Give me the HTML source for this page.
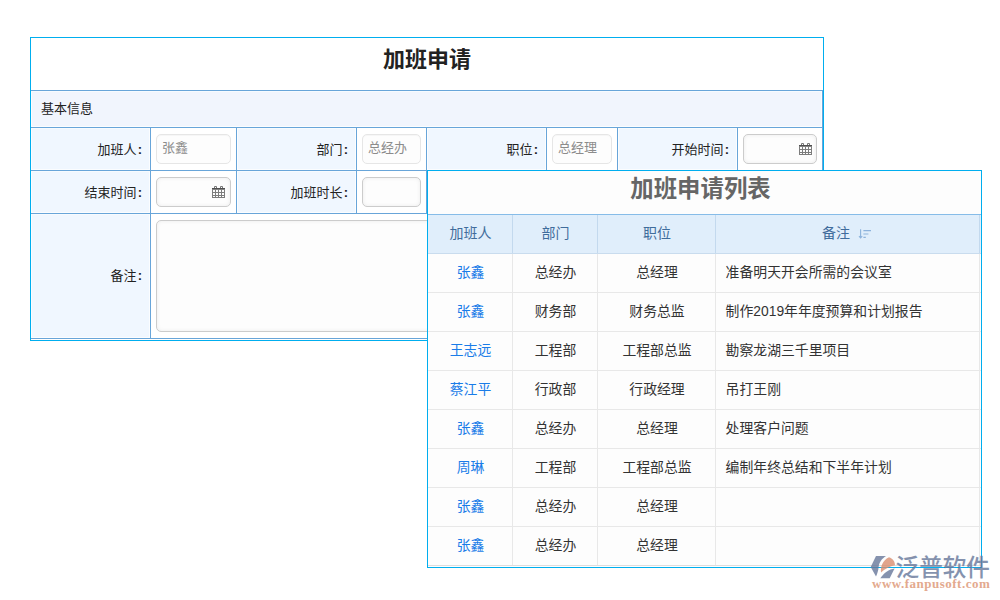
<!DOCTYPE html>
<html lang="zh-CN">
<head>
<meta charset="utf-8">
<title>加班申请</title>
<style>
*{box-sizing:border-box;margin:0;padding:0}
html,body{width:1000px;height:600px;overflow:hidden;background:#fff}
body{position:relative;font-family:"Liberation Sans","Noto Sans CJK SC",sans-serif;font-size:13px;color:#222}
.abs{position:absolute}
#p1{left:30px;top:37px;width:794px;height:304px;border:1px solid #00aeef;background:#fff}
/* coordinates inside #p1 are global minus (31,38) */
.hl{position:absolute;height:1px;background:#68a5d9}
.vl{position:absolute;width:1px;background:#68a5d9}
.bg{position:absolute;background:#f0f7ff;border:1px solid #fbfdff;border-top-color:#f7fbff}
.lab i{font-style:normal;font-weight:bold;margin-left:1.2px;margin-right:1px}
.lab{position:absolute;text-align:right;white-space:nowrap;line-height:20px;height:20px;color:#222}
.inp{position:absolute;height:30px;border:1px solid #ccc;border-radius:5px;background:#fdfdfd;box-shadow:inset 0 0 4px rgba(0,0,0,.07);color:#8c8c8c;line-height:26px;padding-left:5px;white-space:nowrap;overflow:hidden}
.inp.ro{border-color:#e6e6e6;box-shadow:inset 0 1px 1px rgba(0,0,0,.03)}
.cal{position:absolute;width:13px;height:12px}
#t1{left:0;top:0;width:792px;height:52px;line-height:44px;text-align:center;font-size:22px;font-weight:bold;color:#222}
#p2{left:427px;top:170px;width:555px;height:398px;border:1px solid #00aeef;background:#fdfdfd}
#t2{left:0;top:0;width:545px;height:43px;line-height:36px;text-align:center;font-size:23.4px;font-weight:bold;color:#666}
#hd{left:0;top:43px;width:553px;height:40px;background:#e0eefb;border-top:1px solid #86bce8;border-bottom:1px solid #c9dcee}
.th{position:absolute;top:0;height:38px;line-height:36px;text-align:center;font-size:14px;color:#3f6c9c}
.gv{position:absolute;width:1px;background:#e8e8e8}
.gh{position:absolute;height:1px;background:#e8e8e8;left:0;width:553px}
.td{position:absolute;height:38px;line-height:37px;font-size:13.85px;color:#333;white-space:nowrap}
.c1{left:0;width:85px;text-align:center;color:#1a7ce8}
.c2{left:85px;width:85px;text-align:center}
.c3{left:170px;width:118px;text-align:center}
.c4{left:297.6px;width:250px;text-align:left}
</style>
</head>
<body>
<div id="p1" class="abs">
  <div id="t1" class="abs">加班申请</div>
  <div class="bg" style="left:0;top:53px;width:791px;height:36px;background:#f1f5fd"></div>
  <div class="lab" style="left:10px;top:61px;text-align:left">基本信息</div>
  <!-- label backgrounds -->
  <div class="bg" style="left:0;top:90px;width:119px;height:42px"></div>
  <div class="bg" style="left:206px;top:90px;width:119px;height:42px"></div>
  <div class="bg" style="left:396px;top:90px;width:119px;height:42px"></div>
  <div class="bg" style="left:587px;top:90px;width:119px;height:42px"></div>
  <div class="bg" style="left:0;top:133px;width:119px;height:42px"></div>
  <div class="bg" style="left:206px;top:133px;width:119px;height:42px"></div>
  <div class="bg" style="left:0;top:176px;width:119px;height:124px"></div>
  <!-- horizontal lines -->
  <div class="hl" style="left:0;top:52px;width:792px"></div>
  <div class="hl" style="left:0;top:89px;width:792px"></div>
  <div class="hl" style="left:0;top:132px;width:792px"></div>
  <div class="hl" style="left:0;top:175px;width:792px"></div>
  <div class="hl" style="left:0;top:300px;width:792px"></div>
  <!-- vertical lines -->
  <div class="vl" style="left:119px;top:90px;height:210px"></div>
  <div class="vl" style="left:205px;top:90px;height:85px"></div>
  <div class="vl" style="left:325px;top:90px;height:85px"></div>
  <div class="vl" style="left:395px;top:90px;height:85px"></div>
  <div class="vl" style="left:515px;top:90px;height:42px"></div>
  <div class="vl" style="left:586px;top:90px;height:42px"></div>
  <div class="vl" style="left:706px;top:90px;height:42px"></div>
  <div class="vl" style="left:791px;top:53px;height:248px"></div>
  <!-- labels -->
  <div class="lab" style="left:0;width:112px;top:102px">加班人<i>:</i></div>
  <div class="lab" style="left:206px;width:112px;top:102px">部门<i>:</i></div>
  <div class="lab" style="left:396px;width:112px;top:102px">职位<i>:</i></div>
  <div class="lab" style="left:587px;width:112px;top:102px">开始时间<i>:</i></div>
  <div class="lab" style="left:0;width:112px;top:145px">结束时间<i>:</i></div>
  <div class="lab" style="left:206px;width:112px;top:145px">加班时长<i>:</i></div>
  <div class="lab" style="left:0;width:112px;top:228px">备注<i>:</i></div>
  <!-- inputs -->
  <div class="inp ro" style="left:125px;top:96px;width:75px">张鑫</div>
  <div class="inp ro" style="left:331px;top:96px;width:59px">总经办</div>
  <div class="inp ro" style="left:521px;top:96px;width:60px">总经理</div>
  <div class="inp" style="left:712px;top:96px;width:74px"></div>
  <div class="inp" style="left:125px;top:139px;width:75px"></div>
  <div class="inp" style="left:331px;top:139px;width:59px"></div>
  <div class="inp" style="left:125px;top:182px;width:660px;height:112px"></div>
  <svg class="cal" style="left:768px;top:105px" viewBox="0 0 13 12" preserveAspectRatio="none"><path d="M2.5 .5h2v2h-2zM8.5 .5h2v2h-2z" fill="#fff" stroke="#777" stroke-width="1"/><rect x="0" y="2" width="13" height="1.7" fill="#505050"/><path d="M.5 3.6V12M3.5 3.6V12M6.5 3.6V12M9.5 3.6V12M12.5 3.6V12M0 6.5h13M0 9.5h13M0 11.5h13" stroke="#7d7d7d" stroke-width="1" fill="none"/></svg>
  <svg class="cal" style="left:181px;top:148px" viewBox="0 0 13 12" preserveAspectRatio="none"><path d="M2.5 .5h2v2h-2zM8.5 .5h2v2h-2z" fill="#fff" stroke="#777" stroke-width="1"/><rect x="0" y="2" width="13" height="1.7" fill="#505050"/><path d="M.5 3.6V12M3.5 3.6V12M6.5 3.6V12M9.5 3.6V12M12.5 3.6V12M0 6.5h13M0 9.5h13M0 11.5h13" stroke="#7d7d7d" stroke-width="1" fill="none"/></svg>
</div>

<div id="p2" class="abs">
  <div id="t2" class="abs">加班申请列表</div>
  <div id="hd" class="abs">
    <div class="th" style="left:0;width:85px">加班人</div>
    <div class="th" style="left:85px;width:85px">部门</div>
    <div class="th" style="left:170px;width:118px">职位</div>
    <div class="th" style="left:288px;width:265px;padding-right:25px">备注</div>
    <div class="gv" style="left:84px;top:0;height:38px;background:#c3d9ee"></div><div class="gv" style="left:169px;top:0;height:38px;background:#c3d9ee"></div><div class="gv" style="left:287px;top:0;height:38px;background:#c3d9ee"></div><div class="gv" style="left:551px;top:0;height:38px;background:#c3d9ee"></div>
    <svg class="abs" style="left:430px;top:13px" width="14" height="12" viewBox="0 0 14 12"><g stroke="#8db3dc" stroke-width="1.1" fill="none"><path d="M2.6 1.2v8.6M1 8.2l1.6 1.8 1.6-1.8M5.4 2.6h7.6M5.4 6h5M5.4 9.4h2.4"/></g></svg>
  </div>
  <!-- column dividers -->
  <div class="gv" style="left:84px;top:83px;height:312px"></div>
  <div class="gv" style="left:169px;top:83px;height:312px"></div>
  <div class="gv" style="left:287px;top:83px;height:312px"></div>
  <div class="gv" style="left:551px;top:83px;height:312px"></div>
  <!-- rows -->
  <div class="gh" style="top:121px"></div>
  <div class="gh" style="top:160px"></div>
  <div class="gh" style="top:199px"></div>
  <div class="gh" style="top:238px"></div>
  <div class="gh" style="top:277px"></div>
  <div class="gh" style="top:316px"></div>
  <div class="gh" style="top:355px"></div>
  <div class="gh" style="top:394px;background:#ddd"></div>

  <div class="td c1" style="top:83px">张鑫</div><div class="td c2" style="top:83px">总经办</div><div class="td c3" style="top:83px">总经理</div><div class="td c4" style="top:83px">准备明天开会所需的会议室</div>
  <div class="td c1" style="top:122px">张鑫</div><div class="td c2" style="top:122px">财务部</div><div class="td c3" style="top:122px">财务总监</div><div class="td c4" style="top:122px">制作2019年年度预算和计划报告</div>
  <div class="td c1" style="top:161px">王志远</div><div class="td c2" style="top:161px">工程部</div><div class="td c3" style="top:161px">工程部总监</div><div class="td c4" style="top:161px">勘察龙湖三千里项目</div>
  <div class="td c1" style="top:200px">蔡江平</div><div class="td c2" style="top:200px">行政部</div><div class="td c3" style="top:200px">行政经理</div><div class="td c4" style="top:200px">吊打王刚</div>
  <div class="td c1" style="top:239px">张鑫</div><div class="td c2" style="top:239px">总经办</div><div class="td c3" style="top:239px">总经理</div><div class="td c4" style="top:239px">处理客户问题</div>
  <div class="td c1" style="top:278px">周琳</div><div class="td c2" style="top:278px">工程部</div><div class="td c3" style="top:278px">工程部总监</div><div class="td c4" style="top:278px">编制年终总结和下半年计划</div>
  <div class="td c1" style="top:317px">张鑫</div><div class="td c2" style="top:317px">总经办</div><div class="td c3" style="top:317px">总经理</div><div class="td c4" style="top:317px"></div>
  <div class="td c1" style="top:356px">张鑫</div><div class="td c2" style="top:356px">总经办</div><div class="td c3" style="top:356px">总经理</div><div class="td c4" style="top:356px"></div>
</div>

<!-- watermark -->
<div class="abs" id="wm" style="left:864px;top:548px;width:136px;height:52px">
  <svg class="abs" style="left:0;top:0" width="50" height="35" viewBox="0 0 50 35"><path d="M12 7.9L22 8C18 10.6 15 14.2 14.6 19.3C14.4 22.4 13.2 26 12 28.6L6.7 19Z" fill="#66779a" fill-opacity=".8"/><path d="M25 9.3C28.6 10.4 31 13.6 31 17.2C25.8 18.2 20.6 21 17 24.6C16.4 18.8 18.4 12.4 25 9.3Z" fill="#da8d6f" fill-opacity=".8"/><path d="M16.3 30.3L25.7 30.3L30.6 20.4C25 21 19.6 25 16.3 30.3Z" fill="#66779a" fill-opacity=".8"/></svg>
  <div class="abs" style="left:31.6px;top:6px;font-size:23.6px;font-weight:500;line-height:28px;color:#66779a;opacity:.8;white-space:nowrap">泛普软件</div>
  <div class="abs" style="left:8px;top:29px;font-family:'Liberation Serif',serif;font-weight:bold;font-size:13px;line-height:14px;color:#e3a98e;white-space:nowrap;letter-spacing:.5px">www.fanpusoft.com</div>
</div>
</body>
</html>
